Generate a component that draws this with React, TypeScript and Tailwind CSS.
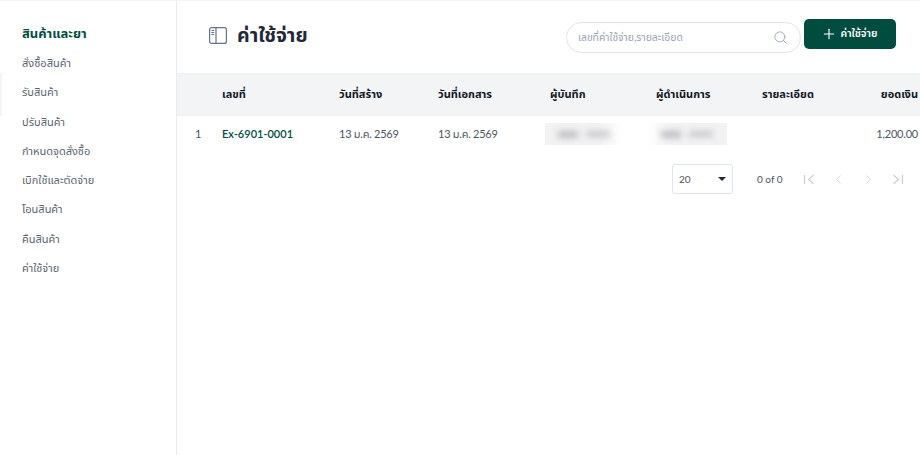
import { Search, Plus, ChevronLeft, ChevronRight } from "lucide-react";

const nav = ["สั่งซื้อสินค้า", "รับสินค้า", "ปรับสินค้า", "กำหนดจุดสั่งซื้อ", "เบิกใช้และตัดจ่าย", "โอนสินค้า", "คืนสินค้า", "ค่าใช้จ่าย"];
const cols = "grid grid-cols-[45px_117px_99px_112px_106px_106px_100px_56px]";

function BlurBars() {
  return (
    <div className="flex h-full items-center justify-center blur-[3px]">
      <span className="h-[7px] w-[20px] bg-[#bdbdc2]" />
      <span className="ml-2 h-[6px] w-[24px] bg-[#c8c8cc]" />
    </div>
  );
}

export default function App() {
  return (
    <div className="flex h-[455px] w-[920px] overflow-hidden border-t border-[#f3f4f6] bg-white font-['Lato','Noto_Sans_Thai','Noto_Sans',sans-serif] text-[11px] text-[#333b45]">
      <aside className="relative w-[177px] shrink-0 border-r border-[#e9edf3] pl-[22px] pt-[22px]">
        <div className="absolute left-0 top-[72px] h-[43px] w-[2px] bg-[#f3f4f6]" />
        <div className="mb-[10px] h-[20px] text-[13px] font-bold leading-[20px] text-[#004d40]">สินค้าและยา</div>
        <nav className="flex flex-col gap-[9.3px]">
          {nav.map((n) => (
            <div key={n} className="h-[20px] leading-[20px] text-[#59646f]">{n}</div>
          ))}
        </nav>
      </aside>
      <main className="min-w-0 flex-1">
        <header className="flex h-[72px] items-start pl-[32px] pr-[24px]">
          <div className="mt-[19px] flex items-center gap-[10px]">
            <svg width="18" height="17" viewBox="0 0 18 17" fill="none" stroke="#64748b" strokeWidth="1.2">
              <rect x="0.6" y="0.6" width="16.8" height="15.8" rx="2" />
              <path d="M7 .6v15.8M2.4 3.5h2.8M2.4 5.5h2.8M2.4 7.5h2.8" />
            </svg>
            <h1 className="text-[19.6px] font-bold leading-[30px] text-[#1f2937]">ค่าใช้จ่าย</h1>
          </div>
          <div className="ml-auto mt-[21px] flex h-[31px] w-[235px] items-center justify-between rounded-full border border-[#dfe5ee] pl-[11px] pr-[12px] text-[10.4px] text-[#98a2b3]">
            <span>เลขที่ค่าใช้จ่าย,รายละเอียด</span>
            <Search size={15} strokeWidth={1.3} className="text-[#8e9bad]" />
          </div>
          <button className="ml-[3px] mt-[18px] flex h-[30px] w-[92px] items-center justify-center gap-[4px] rounded-[5px] bg-[#004d40] pr-[2px] text-[10.5px] font-semibold text-white">
            <Plus size={16} strokeWidth={1.7} />
            <span>ค่าใช้จ่าย</span>
          </button>
        </header>

        <div className={`${cols} h-[43px] items-center border-y border-[#eef0f3] bg-[#f3f4f6] text-[11px] font-bold text-[#111827]`}>
          <div />
          <div>เลขที่</div>
          <div>วันที่สร้าง</div>
          <div>วันที่เอกสาร</div>
          <div>ผู้บันทึก</div>
          <div>ผู้ดำเนินการ</div>
          <div>รายละเอียด</div>
          <div className="text-right">ยอดเงิน</div>
        </div>
        <div className={`${cols} h-[36px] items-center text-[#4b5563]`}>
          <div className="pl-[18px]">1</div>
          <div className="font-semibold text-[#004d40]">Ex-6901-0001</div>
          <div className="tracking-[-0.25px]">13 ม.ค. 2569</div>
          <div className="tracking-[-0.25px]">13 ม.ค. 2569</div>
          <div className="h-[22px] w-[78px] -translate-x-[5px] overflow-hidden bg-gradient-to-r from-[#f2f2f3] from-70% to-white"><BlurBars /></div>
          <div className="h-[22px] w-[80px] -translate-x-[9px] overflow-hidden bg-gradient-to-r from-white to-[#f2f2f3] to-30%"><BlurBars /></div>
          <div />
          <div className="text-right tracking-[-0.2px]">1,200.00</div>
        </div>

        <div className="mt-[12px] flex items-center pl-[495px] text-[10px] text-[#4b5563]">
          <div className="flex h-[30px] w-[61px] items-center justify-between rounded-[3px] border border-[#dfe5ee] pl-[6px] pr-[6px]">
            <span>20</span>
            <span className="h-0 w-0 border-x-[4px] border-t-[4px] border-x-transparent border-t-[#1f2937]" />
          </div>
          <span className="ml-[24px]">0 of 0</span>
          <div className="ml-[19px] flex items-center gap-[14.5px] text-[#c9ced6]">
            <svg width="15" height="15" viewBox="0 0 15 15" fill="none" stroke="currentColor" strokeWidth="1.2">
              <path d="M2.5 3v9M11.5 3 6.5 7.5l5 4.5" />
            </svg>
            <ChevronLeft size={15} strokeWidth={1.3} />
            <ChevronRight size={15} strokeWidth={1.3} />
            <svg width="15" height="15" viewBox="0 0 15 15" fill="none" stroke="currentColor" strokeWidth="1.2">
              <path d="M12.5 3v9M3.5 3l5 4.5-5 4.5" />
            </svg>
          </div>
        </div>
      </main>
    </div>
  );
}
